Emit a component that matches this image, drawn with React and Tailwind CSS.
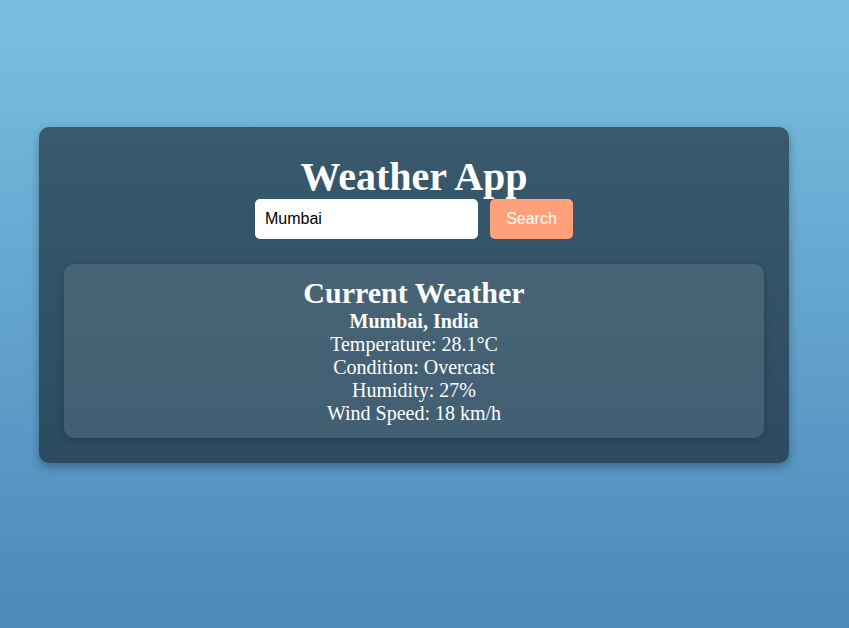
import React, { useState } from 'react';

const weather = {
  city: 'Mumbai',
  country: 'India',
  temp: 28.1,
  condition: 'Overcast',
  humidity: 27,
  wind: 18,
};

const App = () => {
  const [city, setCity] = useState('Mumbai');

  return (
    <div className="min-h-[628px] w-full bg-gradient-to-b from-[#7bc0e1] to-[#4c88b9] pl-[39px] pt-[127px] font-['Liberation_Serif',serif]">
      <div className="w-[750px] h-[336px] rounded-[10px] bg-black/50 shadow-[0_4px_10px_rgba(0,0,0,0.3)] p-[25px] text-white text-center">
        <h1 className="text-[40px] font-bold leading-[46px] pt-[2px]">Weather App</h1>
        <div className="flex justify-center gap-3 -mt-[1px]">
          <input
            value={city}
            onChange={e => setCity(e.target.value)}
            className="w-[223px] h-10 rounded-[5px] bg-white px-[10px] text-black text-base font-['Liberation_Sans',Arial,sans-serif] outline-none"
          />
          <button className="w-[83px] h-10 rounded-[5px] bg-[#ffa07a] text-white text-base font-['Liberation_Sans',Arial,sans-serif]">
            Search
          </button>
        </div>
        <div className="mt-[25px] h-[174px] rounded-[10px] bg-white/10 shadow-[0_2px_8px_rgba(0,0,0,0.2)] pt-[11px]">
          <h2 className="text-[30px] font-bold leading-[35px]">Current Weather</h2>
          <p className="text-[20px] font-bold leading-[23px]">{weather.city}, {weather.country}</p>
          <p className="text-[20px] leading-[23px]">Temperature: {weather.temp}°C</p>
          <p className="text-[20px] leading-[23px]">Condition: {weather.condition}</p>
          <p className="text-[20px] leading-[23px]">Humidity: {weather.humidity}%</p>
          <p className="text-[20px] leading-[23px]">Wind Speed: {weather.wind} km/h</p>
        </div>
      </div>
    </div>
  );
};

export default App;
